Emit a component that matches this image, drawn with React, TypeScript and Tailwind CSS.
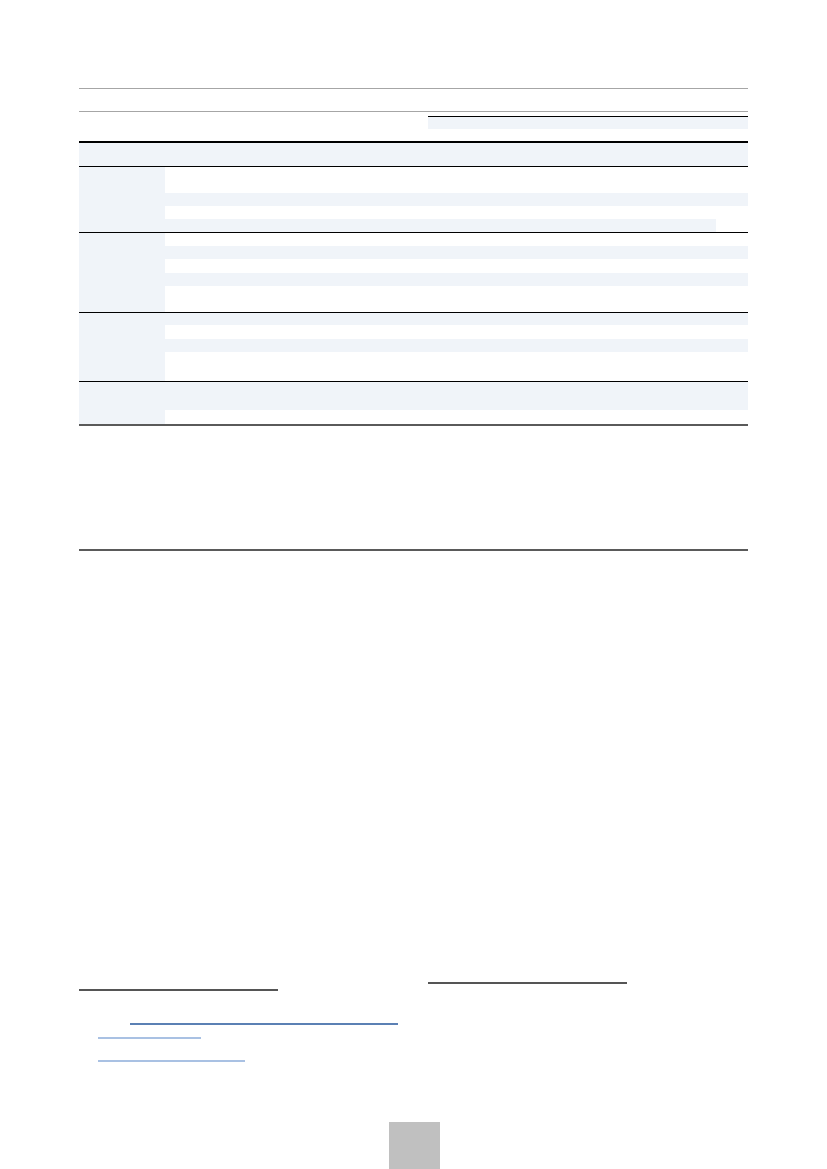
const shade = "bg-[#f0f4f9]";

type Band = { h: number; on?: boolean; w?: string };

const groups: Band[][] = [
  [{ h: 26 }, { h: 13, on: true }, { h: 13 }, { h: 13, on: true, w: "w-[551px]" }],
  [{ h: 13 }, { h: 13, on: true }, { h: 14 }, { h: 13, on: true }, { h: 26 }],
  [{ h: 12, on: true }, { h: 14 }, { h: 13, on: true }, { h: 29 }],
  [{ h: 28, on: true }, { h: 14 }],
];

const heights: Record<number, string> = {
  12: "h-[12px]",
  13: "h-[13px]",
  14: "h-[14px]",
  26: "h-[26px]",
  28: "h-[28px]",
  29: "h-[29px]",
};

function Group({ bands }: { bands: Band[] }) {
  return (
    <div className="flex border-t border-black">
      <div className={`w-[86px] ${shade}`} />
      <div className="flex-1 flex flex-col">
        {bands.map((b, i) => (
          <div key={i} className={`${heights[b.h]} ${b.w ?? "w-full"} ${b.on ? shade : ""}`} />
        ))}
      </div>
    </div>
  );
}

export default function App() {
  return (
    <div
      className="w-[827px] h-[1169px] bg-white flex flex-col pt-[88px] overflow-hidden"
      style={{ fontFamily: '"Liberation Sans", Arial, sans-serif' }}
    >
      <div className="px-[79px]">
        <div className="h-[24px] border-y border-[#a6a6a6]" />

        <div className={`mt-[4px] ml-[349px] h-[13px] border-t border-black ${shade}`} />

        <div className="mt-[12px] border-t-2 border-black border-b-2 border-b-[#5a5a5a]">
          <div className={`h-[23px] ${shade}`} />
          {groups.map((g, i) => (
            <Group key={i} bands={g} />
          ))}
        </div>

        <div className="mt-[123px] h-[2px] bg-[#5a5a5a]" />

        <div className="mt-[431px] flex gap-[150px] items-start">
          <div className="mt-[7px] w-[199px] h-[2px] bg-[#555]" />
          <div className="w-[199px] h-[2px] bg-[#555]" />
        </div>

        <div className="mt-[32px] ml-[51px] w-[268px] h-[2px] bg-[#5b80b4]" />
        <div className="mt-[12px] ml-[19px] w-[103px] h-[2px] bg-[#a9c1e3]" />
        <div className="mt-[21px] ml-[19px] w-[147px] h-[2px] bg-[#a9c1e3]" />
      </div>

      <div className="mt-auto mx-auto translate-x-[1px] w-[51px] h-[47px] bg-[#c0c0c0]" />
    </div>
  );
}
